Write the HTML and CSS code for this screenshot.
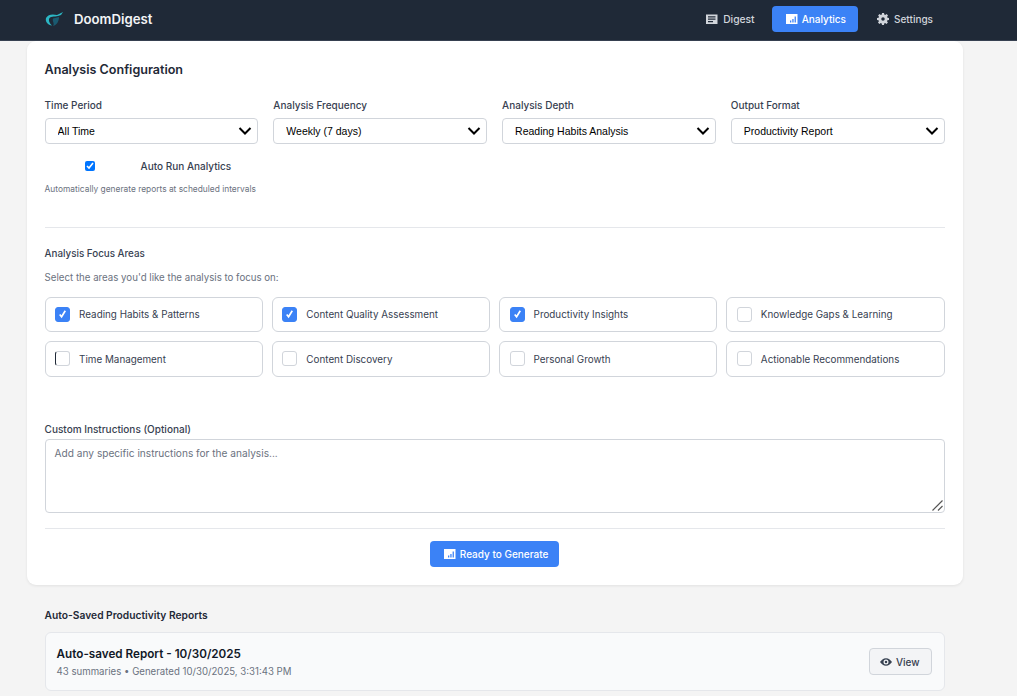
FILE: index.html
```html
<!DOCTYPE html>
<html lang="en">
<head>
<meta charset="utf-8">
<title>DoomDigest</title>
<link rel="stylesheet" href="styles.css">
</head>
<body>
<header class="topbar">
  <div class="brand">
    <svg class="logo" viewBox="0 0 20 16" width="20" height="16"><path d="M1 7C3 3 8 3 12 4L18 1 16 4C12 6 8 5 5 6.500 3 8 4 12 7 14.500 3 14 0 11 1 7Z" fill="#2bb6c4"/><path d="M8 7.500 14 6C14 10 12 14 8 15 10 13 7 10 8 7.500Z" fill="#1a5a70"/></svg>
    <span class="brand-name">DoomDigest</span>
  </div>
  <nav class="nav">
    <a class="nav-item digest"><svg viewBox="0 0 12 12" width="12" height="12"><path fill="#d1d5db" fill-rule="evenodd" d="M0 1.500h11.500v9.500H0zM2 3.200v1.300h7.500V3.200zM2 5.600v1.200h7.500V5.600zM2 7.900v1.300h5V7.900z"/></svg>Digest</a>
    <a class="nav-item active"><svg viewBox="0 0 12 12" width="12" height="12"><path fill="#fff" fill-rule="evenodd" d="M0 1h11.500v10H0zM4 7.500v2h1.300v-2zM6.300 6v3.500h1.300V6zM8.600 3.500v6h1.300v-6z"/></svg>Analytics</a>
    <a class="nav-item"><svg viewBox="0 0 24 24" width="12" height="12"><path fill="#d1d5db" d="M10 0h4l.6 3.200 1.900.8 2.700-1.800 2.800 2.800-1.800 2.700.8 1.900L24 10v4l-3.200.6-.8 1.900 1.800 2.700-2.800 2.800-2.700-1.800-1.900.8L14 24h-4l-.6-3.200-1.900-.8-2.700 1.800-2.800-2.800 1.800-2.700-.8-1.900L0 14v-4l3.200-.6.8-1.900-1.800-2.700L5 2l2.700 1.800 1.900-.8zM12 8.500a3.500 3.500 0 1 0 0 7 3.500 3.500 0 0 0 0-7z"/></svg>Settings</a>
  </nav>
</header>

<main class="page">
  <section class="card">
    <h2 class="card-title">Analysis Configuration</h2>

    <div class="fields">
      <div class="field">
        <label class="field-label">Time Period</label>
        <select class="select"><option>All Time</option></select>
        <label class="auto-run"><input type="checkbox" class="auto-check" checked><span>Auto Run Analytics</span></label>
        <p class="hint">Automatically generate reports at scheduled intervals</p>
      </div>
      <div class="field">
        <label class="field-label">Analysis Frequency</label>
        <select class="select"><option>Weekly (7 days)</option></select>
      </div>
      <div class="field">
        <label class="field-label">Analysis Depth</label>
        <select class="select"><option>Reading Habits Analysis</option></select>
      </div>
      <div class="field">
        <label class="field-label">Output Format</label>
        <select class="select"><option>Productivity Report</option></select>
      </div>
    </div>

    <div class="focus">
      <h3 class="focus-title">Analysis Focus Areas</h3>
      <p class="focus-sub">Select the areas you'd like the analysis to focus on:</p>
      <div class="focus-grid">
        <div class="option"><span class="box on"><svg viewBox="0 0 14 14" width="14" height="14"><path d="M4 7.500 6 10 10 3.500" fill="none" stroke="#fff" stroke-width="1.800"/></svg></span>Reading Habits &amp; Patterns</div>
        <div class="option"><span class="box on"><svg viewBox="0 0 14 14" width="14" height="14"><path d="M4 7.500 6 10 10 3.500" fill="none" stroke="#fff" stroke-width="1.800"/></svg></span>Content Quality Assessment</div>
        <div class="option"><span class="box on"><svg viewBox="0 0 14 14" width="14" height="14"><path d="M4 7.500 6 10 10 3.500" fill="none" stroke="#fff" stroke-width="1.800"/></svg></span>Productivity Insights</div>
        <div class="option"><span class="box"></span>Knowledge Gaps &amp; Learning</div>
        <div class="option"><span class="box edge"></span>Time Management</div>
        <div class="option"><span class="box"></span>Content Discovery</div>
        <div class="option"><span class="box"></span>Personal Growth</div>
        <div class="option"><span class="box"></span>Actionable Recommendations</div>
      </div>
    </div>

    <div class="custom">
      <label class="field-label">Custom Instructions (Optional)</label>
      <div class="textarea-wrap">
        <textarea class="textarea" placeholder="Add any specific instructions for the analysis..."></textarea>
        <svg class="grip" viewBox="0 0 11 11" width="11" height="11"><path d="M.500 10.500 10.500.500M6 10.500 10.500 6" fill="none" stroke="#555" stroke-width="1.200"/></svg>
      </div>
    </div>

    <div class="actions">
      <button class="primary"><svg viewBox="0 0 12 12" width="12" height="12"><path fill="#fff" fill-rule="evenodd" d="M0 1h11.500v10H0zM4 7.500v2h1.300v-2zM6.300 6v3.500h1.300V6zM8.600 3.500v6h1.300v-6z"/></svg>Ready to Generate</button>
    </div>
  </section>

  <section class="saved">
    <h3 class="saved-title">Auto-Saved Productivity Reports</h3>
    <div class="report">
      <div>
        <div class="report-name">Auto-saved Report - 10/30/2025</div>
        <div class="report-meta">43 summaries • Generated 10/30/2025, 3:31:43 PM</div>
      </div>
      <button class="view"><svg viewBox="0 0 24 24" width="12" height="12"><path fill="#374151" fill-rule="evenodd" d="M12 4.500C6.500 4.500 2.500 8.500 0 12c2.500 3.500 6.500 7.500 12 7.500s9.500-4 12-7.500c-2.500-3.500-6.500-7.500-12-7.500zM12 17a5 5 0 1 1 0-10 5 5 0 0 1 0 10zM12 9.500a2.500 2.500 0 1 0 0 5 2.500 2.500 0 0 0 0-5z"/></svg>View</button>
    </div>
  </section>
</main>
</body>
</html>
```
FILE: styles.css
```css
* { box-sizing: border-box; }
html, body { height: 100%; }
body {
  margin: 0;
  height: 696px;
  overflow: hidden;
  background: #f4f4f4;
  font-family: Inter, "Liberation Sans", sans-serif;
  color: #1f2937;
}
.topbar {
  height: 41px;
  background: #1f2937;
  border-bottom: 1px solid #374151;
  display: flex;
  align-items: center;
  justify-content: space-between;
  padding: 0 72px 2px 45px;
}
.brand { display: flex; align-items: center; gap: 9px; }
.logo { display: block; }
.brand-name { color: #f3f4f6; font-size: 13.200px; font-weight: 600; }
.nav { display: flex; gap: 5px; align-items: center; }
.nav-item {
  display: flex;
  align-items: center;
  gap: 5px;
  height: 26px;
  padding: 0 12px 0 14px;
  border-radius: 4px;
  color: #d1d5db;
  font-size: 10px;
  font-weight: 500;
}
.nav-item.digest { font-size: 10.300px; }
.nav-item.active { background: #3b82f6; color: #fff; gap: 4px; }

.page { padding: 0 54.400px 0 26.600px; }
.card {
  height: 544px;
  background: #fff;
  border-radius: 9px;
  padding: 18px;
  box-shadow: 0 1px 3px rgba(0, 0, 0, .08);
}
.card-title {
  margin: 3px 0 0;
  font-size: 12.550px;
  line-height: 16px;
  font-weight: 600;
  color: #1f2937;
}
.fields {
  display: grid;
  grid-template-columns: repeat(4, 1fr);
  gap: 15px;
  margin-top: 20px;
}
.field { display: flex; flex-direction: column; }
.field-label {
  font-size: 10px;
  line-height: 14px;
  font-weight: 500;
  color: #374151;
  margin-bottom: 6px;
}
.select {
  appearance: none;
  height: 26px;
  width: 100%;
  background: #fff url("data:image/svg+xml,%3Csvg xmlns='http://www.w3.org/2000/svg' width='14' height='8' viewBox='0 0 14 8'%3E%3Cpath d='M1.500 1 7 6.500 12.500 1' fill='none' stroke='%23000' stroke-width='2'/%3E%3C/svg%3E") no-repeat right 5px center;
  border: 1px solid #d1d5db;
  border-radius: 4px;
  padding: 0 12px;
  font-family: "Liberation Sans", sans-serif;
  font-size: 10.500px;
  color: #000;
}
.auto-run {
  display: flex;
  align-items: center;
  height: 14px;
  margin-top: 15px;
  font-size: 10px;
  font-weight: 500;
  color: #374151;
}
.auto-check {
  width: 10px;
  height: 10px;
  margin: 0 46px 0 40px;
  accent-color: #0075ff;
}
.hint { margin: 11px 0 0; font-size: 8.400px; line-height: 10px; color: #6b7280; white-space: nowrap; }

.focus { margin-top: 33px; border-top: 1px solid #e5e7eb; padding-top: 19px; }
.focus-title { margin: 0; font-size: 9.800px; line-height: 14px; font-weight: 500; color: #374151; }
.focus-sub { margin: 10px 0 0; font-size: 9.700px; line-height: 14px; color: #6b7280; }
.focus-grid {
  display: grid;
  grid-template-columns: repeat(4, 1fr);
  gap: 9px;
  margin-top: 11.900px;
}
.option {
  display: flex;
  align-items: center;
  gap: 9px;
  height: 35.500px;
  padding: 0 10px 1px 9.500px;
  border: 1px solid #d1d5db;
  border-radius: 6px;
  font-size: 9.850px;
  color: #374151;
}
.box {
  width: 15px;
  height: 15px;
  flex: none;
  border: 1px solid #d1d5db;
  border-radius: 3px;
  background: #fff;
  display: flex;
  align-items: center;
  justify-content: center;
}
.box.on { background: #3b82f6; border-color: #3b82f6; }
.box.edge { border-left-color: #1f2937; }

.custom { margin-top: 45.100px; display: flex; flex-direction: column; }
.custom .field-label { margin-bottom: 3px; }
.textarea-wrap { position: relative; }
.textarea {
  display: block;
  width: 100%;
  height: 74px;
  border: 1px solid #d1d5db;
  border-radius: 4px;
  padding: 7px 9px;
  resize: none;
  font-family: Inter, sans-serif;
  font-size: 10.150px;
  color: #374151;
}
.textarea::placeholder { color: #6b7280; }
.grip { position: absolute; right: 2px; bottom: 2px; }
.actions {
  margin-top: 15px;
  border-top: 1px solid #e5e7eb;
  padding-top: 12px;
  display: flex;
  justify-content: center;
}
.primary {
  display: flex;
  align-items: center;
  gap: 4px;
  height: 26px;
  padding: 0 11px 0 14px;
  border: 0;
  border-radius: 4px;
  background: #3b82f6;
  color: #fff;
  font-family: Inter, sans-serif;
  font-size: 10px;
  font-weight: 500;
}
.saved { padding: 0 18px; margin-top: 23px; }
.saved-title { margin: 0; font-size: 10.250px; line-height: 14px; font-weight: 600; color: #1f2937; }
.report {
  margin-top: 10px;
  height: 59px;
  background: #f9fafb;
  border: 1px solid #e5e7eb;
  border-radius: 6px;
  padding: 0 12px 0 11px;
  display: flex;
  align-items: center;
  justify-content: space-between;
}
.report-name { font-size: 11.700px; line-height: 16px; font-weight: 600; color: #111827; }
.report-meta { margin-top: 3px; font-size: 9.630px; line-height: 13px; color: #6b7280; }
.view {
  display: flex;
  align-items: center;
  gap: 4px;
  height: 27px;
  padding: 0 11px 0 10px;
  background: #f3f4f6;
  border: 1px solid #d1d5db;
  border-radius: 4px;
  font-family: Inter, sans-serif;
  font-size: 10px;
  font-weight: 500;
  color: #374151;
}
```
